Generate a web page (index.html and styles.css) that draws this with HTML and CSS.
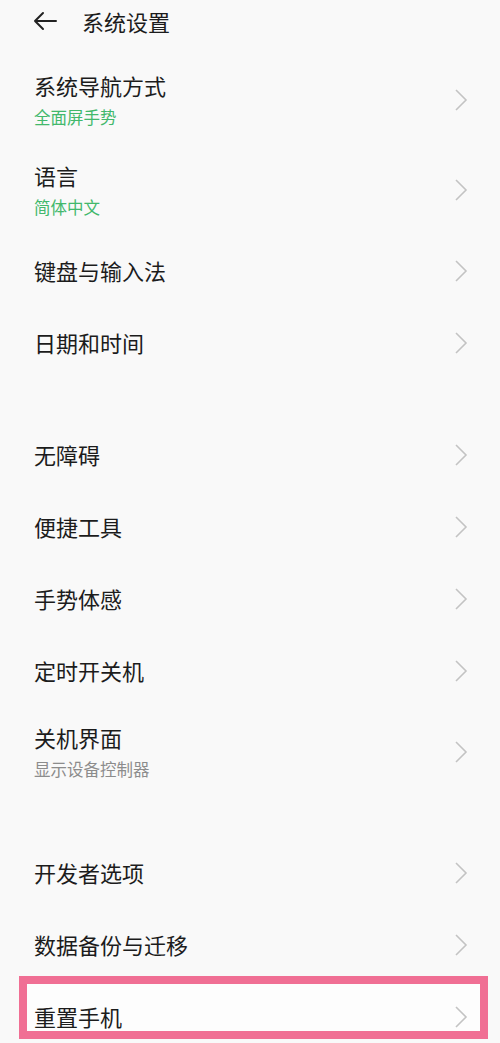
FILE: index.html
```html
<!DOCTYPE html>
<html lang="zh">
<head>
<meta charset="utf-8">
<link rel="stylesheet" href="styles.css">
</head>
<body>
<div class="page">
  <header class="topbar">
    <svg class="back" width="26" height="20" viewBox="0 0 26 20"><path d="M24 10H3M11 2L3 10L11 18" fill="none" stroke="#222" stroke-width="2" stroke-linecap="round" stroke-linejoin="round"/></svg>
    <span class="title">系统设置</span>
  </header>

  <section class="group">
    <div class="row tall"><div class="txt"><div class="name">系统导航方式</div><div class="sub green">全面屏手势</div></div><svg class="chev" width="14" height="24" viewBox="0 0 14 24"><path d="M2 2L12 12L2 22" fill="none" stroke="#c3c3c3" stroke-width="1.6"/></svg></div>
    <div class="row tall"><div class="txt"><div class="name">语言</div><div class="sub green">简体中文</div></div><svg class="chev" width="14" height="24" viewBox="0 0 14 24"><path d="M2 2L12 12L2 22" fill="none" stroke="#c3c3c3" stroke-width="1.6"/></svg></div>
    <div class="row"><div class="txt"><div class="name">键盘与输入法</div></div><svg class="chev" width="14" height="24" viewBox="0 0 14 24"><path d="M2 2L12 12L2 22" fill="none" stroke="#c3c3c3" stroke-width="1.6"/></svg></div>
    <div class="row"><div class="txt"><div class="name">日期和时间</div></div><svg class="chev" width="14" height="24" viewBox="0 0 14 24"><path d="M2 2L12 12L2 22" fill="none" stroke="#c3c3c3" stroke-width="1.6"/></svg></div>
  </section>

  <section class="group">
    <div class="row"><div class="txt"><div class="name">无障碍</div></div><svg class="chev" width="14" height="24" viewBox="0 0 14 24"><path d="M2 2L12 12L2 22" fill="none" stroke="#c3c3c3" stroke-width="1.6"/></svg></div>
    <div class="row"><div class="txt"><div class="name">便捷工具</div></div><svg class="chev" width="14" height="24" viewBox="0 0 14 24"><path d="M2 2L12 12L2 22" fill="none" stroke="#c3c3c3" stroke-width="1.6"/></svg></div>
    <div class="row"><div class="txt"><div class="name">手势体感</div></div><svg class="chev" width="14" height="24" viewBox="0 0 14 24"><path d="M2 2L12 12L2 22" fill="none" stroke="#c3c3c3" stroke-width="1.6"/></svg></div>
    <div class="row"><div class="txt"><div class="name">定时开关机</div></div><svg class="chev" width="14" height="24" viewBox="0 0 14 24"><path d="M2 2L12 12L2 22" fill="none" stroke="#c3c3c3" stroke-width="1.6"/></svg></div>
    <div class="row tall"><div class="txt"><div class="name">关机界面</div><div class="sub gray">显示设备控制器</div></div><svg class="chev" width="14" height="24" viewBox="0 0 14 24"><path d="M2 2L12 12L2 22" fill="none" stroke="#c3c3c3" stroke-width="1.6"/></svg></div>
  </section>

  <section class="group">
    <div class="row"><div class="txt"><div class="name">开发者选项</div></div><svg class="chev" width="14" height="24" viewBox="0 0 14 24"><path d="M2 2L12 12L2 22" fill="none" stroke="#c3c3c3" stroke-width="1.6"/></svg></div>
    <div class="row"><div class="txt"><div class="name">数据备份与迁移</div></div><svg class="chev" width="14" height="24" viewBox="0 0 14 24"><path d="M2 2L12 12L2 22" fill="none" stroke="#c3c3c3" stroke-width="1.6"/></svg></div>
    <div class="row marked"><div class="txt"><div class="name">重置手机</div></div><svg class="chev" width="14" height="24" viewBox="0 0 14 24"><path d="M2 2L12 12L2 22" fill="none" stroke="#c3c3c3" stroke-width="1.6"/></svg></div>
  </section>
</div>
</body>
</html>
```

FILE: styles.css
```css
html, body {
  margin: 0;
  padding: 0;
  background: #f9f9f9;
}
body {
  font-family: "Noto Sans CJK SC", "Noto Sans", sans-serif;
  color: #1c1c1c;
  overflow: hidden;
}
.page {
  width: 500px;
  height: 1043px;
  overflow: hidden;
}
.topbar {
  height: 42px;
  display: flex;
  align-items: center;
  padding-left: 32px;
  margin-bottom: 13px;
}
.back {
  display: block;
}
.title {
  margin-left: 24px;
  font-size: 22px;
  line-height: 1;
  color: #1c1c1c;
}
.group + .group {
  margin-top: 40px;
}
.row {
  height: 72px;
  box-sizing: border-box;
  display: flex;
  align-items: center;
  justify-content: space-between;
  padding: 0 32px 0 34px;
}
.row.tall {
  height: 90px;
}
.txt {
  margin-bottom: 3px;
}
.tall .txt {
  margin-bottom: 1px;
}
.name {
  font-size: 22px;
  line-height: 28px;
  color: #1c1c1c;
}
.sub {
  font-size: 16.5px;
  line-height: 22px;
  margin-top: 7px;
}
.green {
  color: #42b86c;
}
.gray {
  color: #8c8c8c;
}
.chev {
  display: block;
}
.marked {
  position: relative;
}
.marked::after {
  content: "";
  position: absolute;
  left: 19px;
  top: -5px;
  width: 453px;
  height: 47px;
  border: 8px solid #f06f94;
  background: rgba(255, 255, 255, 0.6);
  pointer-events: none;
}
.marked .txt, .marked .chev {
  position: relative;
  z-index: 1;
}
```
